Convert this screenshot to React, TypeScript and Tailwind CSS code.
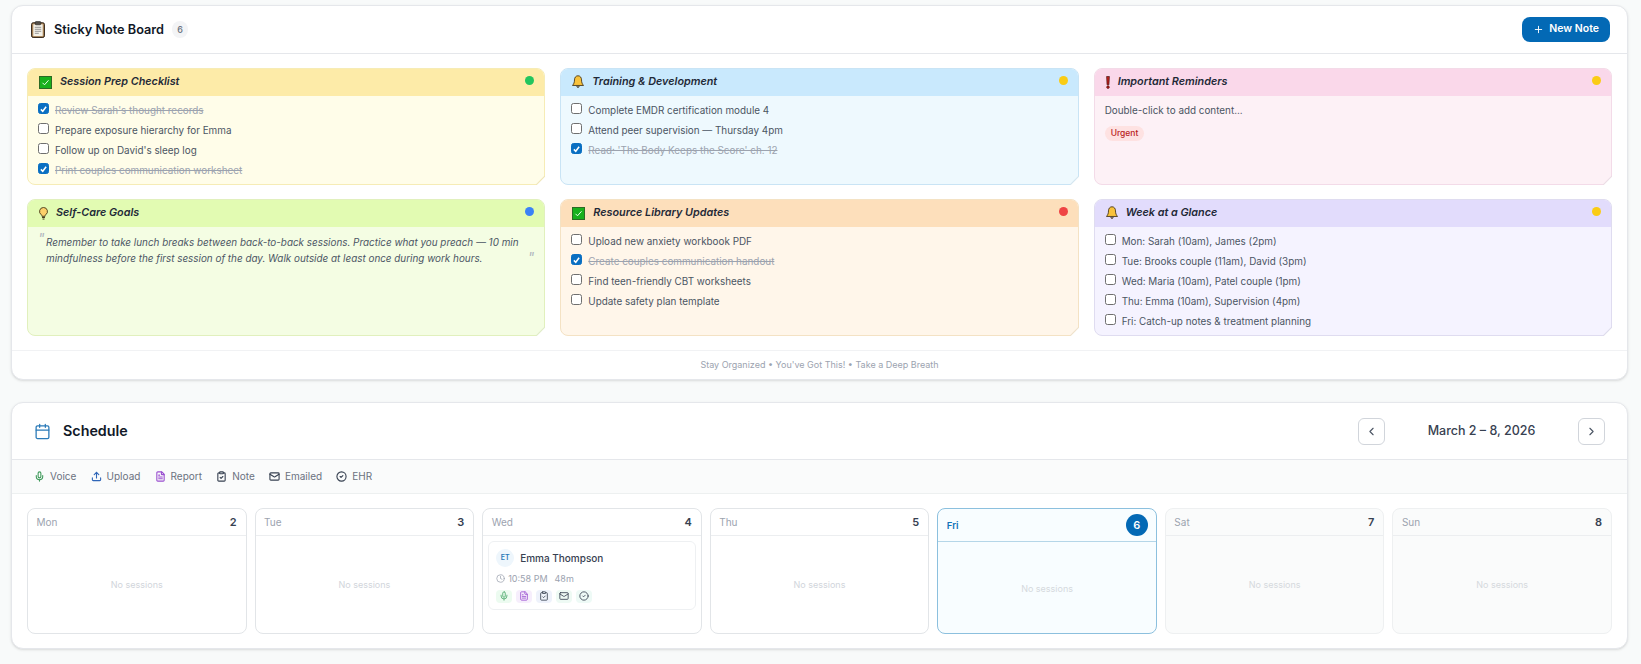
import { Calendar, ChevronLeft, ChevronRight, CircleCheck, Clock, ClipboardCheck, FileText, Mail, Mic, Plus, Upload } from "lucide-react";

function ClipboardEmoji() {
  return (
    <svg viewBox="0 0 14 17" className="h-[17px] w-[14px]">
      <rect x="0.6" y="1.800" width="12.800" height="14.600" rx="1.500" fill="#b08a5c" stroke="#2a1d12" strokeWidth="1" />
      <rect x="2.300" y="3.300" width="9.400" height="11.800" fill="#f4f1e8" />
      <rect x="4.200" y="0.600" width="5.600" height="3.200" rx="0.800" fill="#55504a" stroke="#222" strokeWidth="0.6" />
      <path d="M3.800 6.300h6.400M3.800 8.300h6.400M3.800 10.300h6.400M3.800 12.300h4" stroke="#8c8c8c" strokeWidth="0.9" />
    </svg>
  );
}

function CheckEmoji() {
  return (
    <svg viewBox="0 0 13 13" className="h-[13px] w-[13px]">
      <rect x="0.5" y="0.5" width="12" height="12" fill="#19b01d" stroke="#2c6a24" />
      <path d="M3.500 6.800l2 2 4-4.500" fill="none" stroke="#e8ffe8" strokeWidth="1" />
    </svg>
  );
}

function BellEmoji() {
  return (
    <svg viewBox="0.5 0.5 13 14.500" className="h-[14px] w-[12px]">
      <path d="M7 1C4.600 1 3.200 3 3.200 5.500c0 3-1 4.600-2.200 6h12c-1.200-1.400-2.200-3-2.200-6C10.800 3 9.400 1 7 1z" fill="#f8c23c" stroke="#3a2a10" strokeWidth="0.9" />
      <path d="M5.500 12.500a1.600 1.600 0 003 0" fill="#3a2a10" stroke="#3a2a10" strokeWidth="0.8" />
    </svg>
  );
}

function BulbEmoji() {
  return (
    <svg viewBox="0.5 0.3 9 13.500" className="h-[13px] w-[9px]">
      <path d="M5 .8a4.100 4.100 0 00-2.300 7.500c.5.4.7 1 .7 1.700h3.200c0-.7.2-1.300.7-1.700A4.100 4.100 0 005 .8z" fill="#fcd06a" stroke="#3f2f14" strokeWidth="0.9" />
      <path d="M3.500 11.200h3M4 12.800h2" stroke="#3f2f14" strokeWidth="1" />
    </svg>
  );
}

function BangEmoji() {
  return (
    <svg viewBox="0 0 4 14" className="h-[13px] w-[4px]">
      <path d="M.5 .5h3L3 9.500H1z" fill="#c0201c" stroke="#3a0d0c" strokeWidth="0.7" />
      <circle cx="2" cy="12" r="1.400" fill="#c0201c" stroke="#3a0d0c" strokeWidth="0.6" />
    </svg>
  );
}

type Item = { text: string; done?: boolean };

function CheckRow({ text, done }: Item) {
  return (
    <div className="flex h-[20px] items-start gap-[6px]">
      <span className={`flex h-[11px] w-[11px] shrink-0 items-center justify-center rounded-[2.5px] border ${done ? "border-[#0a6fc2] bg-[#0a6fc2]" : "border-[#6f6f6f] bg-white"}`}>
        {done && (
          <svg viewBox="0 0 12 12" className="h-[10px] w-[10px]">
            <path d="M2.500 6.500l2.500 2.500 4.500-6" fill="none" stroke="#fff" strokeWidth="2" />
          </svg>
        )}
      </span>
      <span className={`text-[9.9px] leading-[15px] ${done ? "text-[#9ca3af] line-through" : "text-[#4b5563]"}`}>{text}</span>
    </div>
  );
}

function Note({
  title,
  icon,
  dot,
  head,
  body,
  edge,
  fold,
  children,
}: {
  title: string;
  icon: React.ReactNode;
  dot: string;
  head: string;
  body: string;
  edge: string;
  fold: string;
  children: React.ReactNode;
}) {
  return (
    <div className={`relative rounded-[8px] border ${edge} ${body}`}>
      <div className={`flex h-[27px] items-center justify-between rounded-t-[7px] pl-[11px] pr-[10px] ${head}`}>
        <div className="mb-[1px] flex items-center gap-[8px]">
          <span className="flex items-center">{icon}</span>
          <span className="text-[10.8px] font-semibold italic text-[#1f2937]">{title}</span>
        </div>
        <span className={`mb-[5px] h-[9px] w-[9px] rounded-full ${dot}`} />
      </div>
      <div className="px-[10px] pt-[7px]">{children}</div>
      <svg viewBox="0 0 9 9" className={`absolute -bottom-px -right-px h-[9px] w-[9px] ${fold}`}>
        <path d="M0 9L9 0V9z" fill="#fff" />
        <path d="M0 9L9 0" stroke="currentColor" strokeWidth="1.200" />
      </svg>
    </div>
  );
}

function DayCell({ day, date, today, muted, children }: { day: string; date: number; today?: boolean; muted?: boolean; children?: React.ReactNode }) {
  const wrap = today ? "border-[#8cc0de] bg-[#f8fdff]" : muted ? "border-[#eef0f1] bg-[#fafbfb]" : "border-[#e2e5e8] bg-white";
  return (
    <div className={`flex h-[126px] flex-col overflow-hidden rounded-[8px] border ${wrap}`}>
      <div className={`flex shrink-0 items-center justify-between pl-[8.5px] ${today ? "h-[33px] border-b border-[#b5d6e8] pr-[8px]" : "h-[27px] border-b border-[#eceef0] pr-[9px]"}`}>
        <span className={today ? "mt-[3px] text-[9.5px] font-semibold text-[#1173b8]" : "text-[10px] text-[#9ca3af]"}>{day}</span>
        {today ? (
          <span className="flex h-[22px] w-[22px] items-center justify-center rounded-full bg-[#0369b5] text-[11px] font-semibold text-white">{date}</span>
        ) : (
          <span className="text-[11px] font-semibold text-[#374151]">{date}</span>
        )}
      </div>
      {children ?? (
        <div className={`flex flex-1 items-center justify-center text-[9px] ${muted || today ? "text-[#d5d9dd]" : "text-[#d1d5db]"} ${today ? "pt-[2px]" : ""}`}>No sessions</div>
      )}
    </div>
  );
}

function Chip({ className, children }: { className: string; children: React.ReactNode }) {
  return <span className={`flex h-[13px] w-[16px] items-center justify-center rounded-[4px] ${className}`}>{children}</span>;
}

const legend = [
  { label: "Voice", icon: <Mic strokeWidth={2.4} className="h-[11px] w-[11px] text-[#3f9a5b]" /> },
  { label: "Upload", icon: <Upload strokeWidth={2.4} className="h-[11px] w-[11px] text-[#2f66b8]" /> },
  { label: "Report", icon: <FileText strokeWidth={2.4} className="h-[11px] w-[11px] text-[#9a4fd0]" /> },
  { label: "Note", icon: <ClipboardCheck strokeWidth={2.4} className="h-[11px] w-[11px] text-[#374151]" /> },
  { label: "Emailed", icon: <Mail strokeWidth={2.4} className="h-[11px] w-[11px] text-[#374151]" /> },
  { label: "EHR", icon: <CircleCheck strokeWidth={2.4} className="h-[11px] w-[11px] text-[#374151]" /> },
];

export default function App() {
  return (
    <main className="flex h-[664px] flex-col gap-[22px] overflow-hidden bg-[#f8fafa] pl-[11px] pr-[13px] pt-[5px] font-['Inter',sans-serif]">
      <section className="rounded-[12px] border border-[#e5e7eb] bg-white shadow-sm">
        <div className="flex h-[48px] items-center justify-between border-b border-[#e5e7eb] pl-[19px] pr-[17px]">
          <div className="flex items-center gap-[8px]">
            <ClipboardEmoji />
            <h2 className="ml-[1px] text-[12.7px] font-semibold text-[#111827]">Sticky Note Board</h2>
            <span className="flex h-[17px] w-[16px] items-center justify-center rounded-full bg-[#f3f4f6] text-[9px] font-medium text-[#6b7280]">6</span>
          </div>
          <button className="mb-[1px] flex h-[25px] items-center gap-[5px] rounded-[8px] bg-[#0369b5] px-[11px] text-[10.5px] font-semibold text-white">
            <Plus className="h-[11px] w-[11px]" />
            New Note
          </button>
        </div>

        <div className="grid grid-cols-3 gap-x-[15px] gap-y-[14px] px-[15px] pb-[14px] pt-[14px] [grid-template-rows:117px_137px]">
          <Note title="Session Prep Checklist" icon={<CheckEmoji />} dot="bg-[#22c55e]" head="bg-[#fdeba8]" body="bg-[#fffde9]" edge="border-[#f6ecb6]" fold="text-[#f0e6b8]">
            <CheckRow text="Review Sarah's thought records" done />
            <CheckRow text="Prepare exposure hierarchy for Emma" />
            <CheckRow text="Follow up on David's sleep log" />
            <CheckRow text="Print couples communication worksheet" done />
          </Note>
          <Note title="Training & Development" icon={<BellEmoji />} dot="bg-[#facc15]" head="bg-[#c9e9fd]" body="bg-[#eef9fe]" edge="border-[#c9e4f5]" fold="text-[#d4e6f0]">
            <CheckRow text="Complete EMDR certification module 4" />
            <CheckRow text="Attend peer supervision — Thursday 4pm" />
            <CheckRow text="Read: 'The Body Keeps the Score' ch. 12" done />
          </Note>
          <Note title="Important Reminders" icon={<BangEmoji />} dot="bg-[#facc15]" head="bg-[#fad8ea]" body="bg-[#fdf1f6]" edge="border-[#f3dbe8]" fold="text-[#ecdde5]">
            <p className="text-[9.9px] leading-[15px] text-[#4b5563]">Double-click to add content...</p>
            <span className="mt-[3px] inline-block rounded-full bg-[#fee2e2] px-[6px] py-px text-[8.5px] font-medium leading-[13px] text-[#b91c1c]">Urgent</span>
          </Note>
          <Note title="Self-Care Goals" icon={<BulbEmoji />} dot="bg-[#3b82f6]" head="bg-[#e2fbb2]" body="bg-[#f4fde3]" edge="border-[#e1f0bd]" fold="text-[#e0ecc8]">
            <p className="relative pl-[8px] pr-[8px] text-[9.9px] italic leading-[16px] text-[#4b5563]">
              <span className="absolute left-0 top-[-3px] text-[14px] text-[#b0b7bf]">"</span>
              Remember to take lunch breaks between back-to-back sessions. Practice what you preach — 10 min mindfulness before the first session of the day. Walk outside at least once during work hours.
              <span className="absolute bottom-0 right-0 text-[14px] text-[#b0b7bf]">"</span>
            </p>
          </Note>
          <Note title="Resource Library Updates" icon={<CheckEmoji />} dot="bg-[#ef4444]" head="bg-[#fddfbb]" body="bg-[#fff6ea]" edge="border-[#f4e2c4]" fold="text-[#efe2cc]">
            <CheckRow text="Upload new anxiety workbook PDF" />
            <CheckRow text="Create couples communication handout" done />
            <CheckRow text="Find teen-friendly CBT worksheets" />
            <CheckRow text="Update safety plan template" />
          </Note>
          <Note title="Week at a Glance" icon={<BellEmoji />} dot="bg-[#facc15]" head="bg-[#e2dcfc]" body="bg-[#f5f3ff]" edge="border-[#dfdcf0]" fold="text-[#dedcec]">
            <CheckRow text="Mon: Sarah (10am), James (2pm)" />
            <CheckRow text="Tue: Brooks couple (11am), David (3pm)" />
            <CheckRow text="Wed: Maria (10am), Patel couple (1pm)" />
            <CheckRow text="Thu: Emma (10am), Supervision (4pm)" />
            <CheckRow text="Fri: Catch-up notes & treatment planning" />
          </Note>
        </div>

        <div className="flex h-[29px] items-center justify-center border-t border-[#f1f2f4] text-[9px] text-[#9ca3af]">Stay Organized • You've Got This! • Take a Deep Breath</div>
      </section>

      <section className="rounded-[12px] border border-[#e5e7eb] bg-white shadow-sm">
        <div className="flex h-[57px] items-center justify-between border-b border-[#e5e7eb] pl-[22px] pr-[22px]">
          <div className="flex items-center gap-[12px]">
            <Calendar className="h-[17px] w-[17px] text-[#2a7ab8]" strokeWidth={1.8} />
            <h2 className="text-[14.3px] font-semibold text-[#111827]">Schedule</h2>
          </div>
          <div className="flex items-center">
            <button className="flex h-[27px] w-[27px] items-center justify-center rounded-[6px] border border-[#d1d5db] text-[#4b5563]">
              <ChevronLeft className="h-[13px] w-[13px]" />
            </button>
            <span className="w-[193px] text-center text-[12.5px] font-medium text-[#374151]">March 2 – 8, 2026</span>
            <button className="flex h-[27px] w-[27px] items-center justify-center rounded-[6px] border border-[#d1d5db] text-[#4b5563]">
              <ChevronRight className="h-[13px] w-[13px]" />
            </button>
          </div>
        </div>

        <div className="flex h-[34px] items-center gap-[14.2px] border-b border-[#edf0f0] bg-[#fafbfb] px-[22px]">
          {legend.map((l) => (
            <div key={l.label} className="flex items-center gap-[5px]">
              {l.icon}
              <span className="text-[10px] text-[#6b7280]">{l.label}</span>
            </div>
          ))}
        </div>

        <div className="grid grid-cols-7 gap-2 px-[15px] py-[14px]">
          <DayCell day="Mon" date={2} />
          <DayCell day="Tue" date={3} />
          <DayCell day="Wed" date={4}>
            <div className="p-[5px]">
              <div className="rounded-[6px] border border-[#eef0f2] bg-white px-[7px] pb-[6px] pt-[7px]">
                <div className="flex items-center gap-[6px]">
                  <span className="flex h-[18px] w-[18px] items-center justify-center rounded-full bg-[#eef6fc] text-[7px] font-semibold text-[#2a7ab8]">ET</span>
                  <span className="text-[10px] font-medium text-[#374151]">Emma Thompson</span>
                </div>
                <div className="mt-[5px] flex items-center gap-[7px] text-[9px] text-[#9ca3af]">
                  <span className="flex items-center gap-[3px]">
                    <Clock className="h-[9px] w-[9px]" />
                    10:58 PM
                  </span>
                  <span>48m</span>
                </div>
                <div className="mt-[4px] flex items-center gap-[4px]">
                  <Chip className="bg-[#ecfbf0]"><Mic className="h-[10px] w-[10px] text-[#4aa86a]" /></Chip>
                  <Chip className="bg-[#f6eefc]"><FileText className="h-[10px] w-[10px] text-[#9a4fd0]" /></Chip>
                  <Chip className="bg-[#eef2fb]"><ClipboardCheck className="h-[10px] w-[10px] text-[#374151]" /></Chip>
                  <Chip className="bg-[#eefaf4]"><Mail className="h-[10px] w-[10px] text-[#374151]" /></Chip>
                  <Chip className="bg-[#eefaf6]"><CircleCheck className="h-[10px] w-[10px] text-[#374151]" /></Chip>
                </div>
              </div>
            </div>
          </DayCell>
          <DayCell day="Thu" date={5} />
          <DayCell day="Fri" date={6} today />
          <DayCell day="Sat" date={7} muted />
          <DayCell day="Sun" date={8} muted />
        </div>
      </section>
    </main>
  );
}
